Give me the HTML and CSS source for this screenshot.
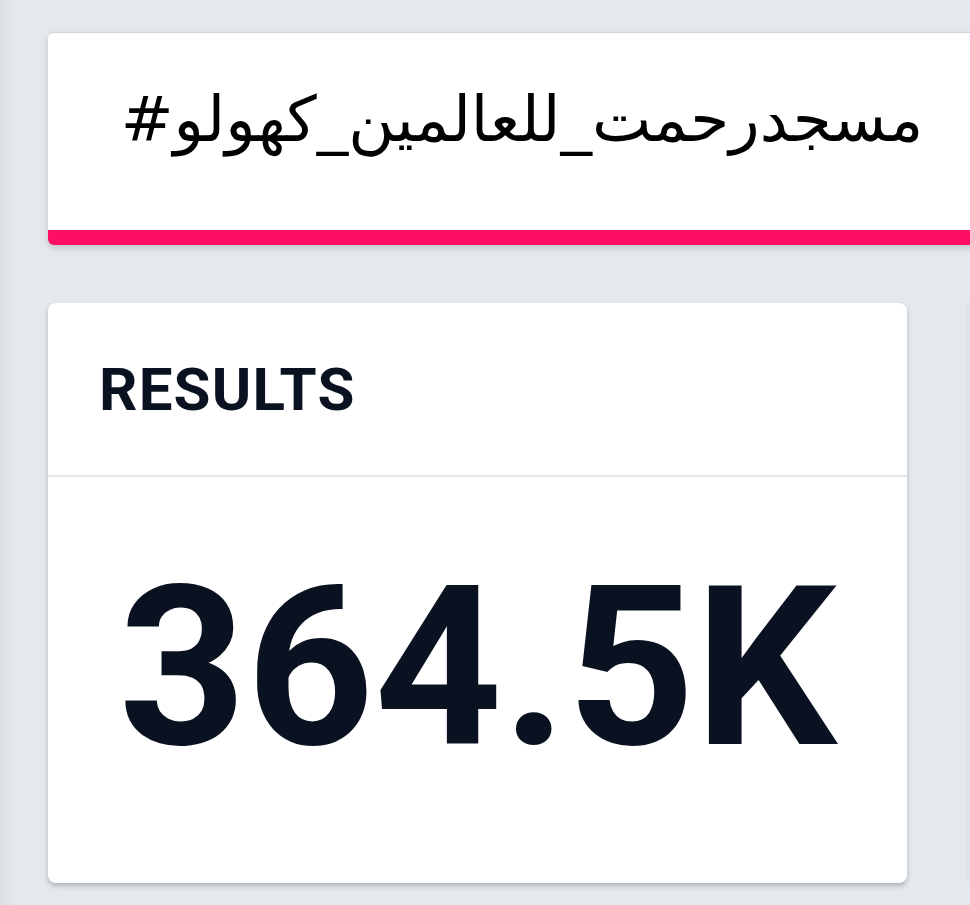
FILE: index.html
```html
<!DOCTYPE html>
<html lang="en">
<head>
<meta charset="utf-8">
<link rel="stylesheet" href="styles.css">
</head>
<body>
<div class="page">
  <div class="tag-card">
    <div class="tag-text" dir="rtl">مسجدرحمت_للعالمين_كهولو#</div>
  </div>
  <div class="grid">
    <div class="stat-card">
      <div class="stat-head">RESULTS</div>
      <div class="stat-body">364.5K</div>
    </div>
    <div class="next-card"></div>
  </div>
</div>
</body>
</html>
```

FILE: styles.css
```css
html, body {
  margin: 0;
  padding: 0;
}
body {
  background: #e5e9ed;
  width: 970px;
  height: 905px;
  overflow: hidden;
  font-family: Roboto, "Liberation Sans", sans-serif;
}
.page {
  height: 905px;
  padding: 32px 0 0 48px;
  box-sizing: border-box;
  background: linear-gradient(to right, #dde1e5 0, #e2e6ea 12px, #e5e9ed 16px);
}
.tag-card {
  width: 948px;
  height: 213px;
  background: #fff;
  border-top: 1px solid #cfd4d9;
  border-radius: 6px;
  box-sizing: border-box;
  border-bottom: 15px solid #fe0f63;
  box-shadow: 0 3px 6px rgba(120, 130, 140, 0.35);
  display: flex;
  align-items: center;
  justify-content: center;
  padding-bottom: 24px;
}
.tag-text {
  font-family: "DejaVu Sans", sans-serif;
  font-size: 63px;
  color: #000;
  white-space: nowrap;
}
.grid {
  display: flex;
  gap: 59px;
  margin-top: 58px;
}
.stat-card {
  width: 859px;
  height: 580px;
  flex: none;
  background: #fff;
  border-radius: 8px;
  box-shadow: 0 3px 5px rgba(110, 115, 125, 0.45);
  display: flex;
  flex-direction: column;
}
.stat-head {
  height: 172px;
  border-bottom: 2px solid #e3e6ea;
  padding-left: 51px;
  display: flex;
  align-items: center;
  font-size: 60px;
  font-weight: 700;
  letter-spacing: 0.02em;
  color: #0a1120;
}
.stat-body {
  flex: 1;
  display: flex;
  align-items: center;
  justify-content: center;
  font-size: 223px;
  font-weight: 700;
  color: #0a1120;
  padding-bottom: 26px;
}
.next-card {
  width: 40px;
  height: 580px;
  flex: none;
  background: #dfe3e7;
}
```
